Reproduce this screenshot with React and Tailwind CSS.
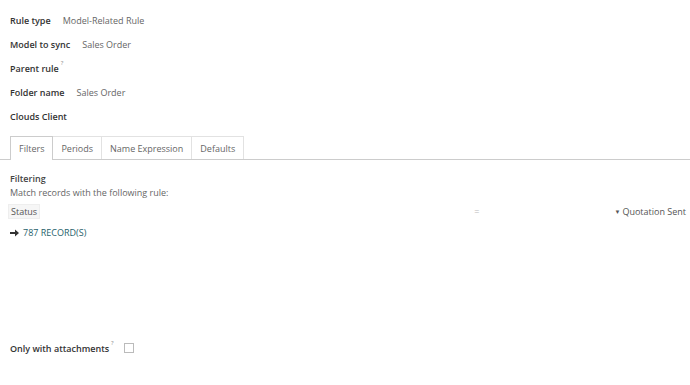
import React from "react";

const Field = ({ label, value, help }) => (
  <div className="flex h-6 items-center">
    <span className="font-semibold text-[#333]">{label}</span>
    {help && <sup className="ml-0.5 -mt-1 text-[6px] text-[#888]">?</sup>}
    {value && <span className="ml-3 text-[#666]">{value}</span>}
  </div>
);

const tabs = ["Filters", "Periods", "Name Expression", "Defaults"];

export default function App() {
  return (
    <div className="min-h-[385px] w-[690px] bg-white text-[9px] font-['Open_Sans',sans-serif] leading-none">
      <div className="px-[10px] pt-2">
        <Field label="Rule type" value="Model-Related Rule" />
        <Field label="Model to sync" value="Sales Order" />
        <Field label="Parent rule" help />
        <Field label="Folder name" value="Sales Order" />
        <Field label="Clouds Client" />
      </div>

      <div className="mt-2 flex h-6 border-b border-[#ccc] pl-[10px]">
        {tabs.map((t, i) => (
          <div
            key={t}
            className={`flex items-center border-x border-t px-[8px] text-[#666] ${
              i === 0 ? "-mb-px border-[#ccc] bg-white" : "border-[#e2e2e2] border-l-0"
            }`}
          >
            {t}
          </div>
        ))}
      </div>

      <div className="pl-[10px] pr-[4px] pt-[14px]">
        <div className="font-semibold text-[#444]">Filtering</div>
        <div className="mt-[5px] text-[#666]">Match records with the following rule:</div>
        <div className="mt-[7px] flex h-[15px] items-center">
          <span className="-ml-[2px] flex h-[15px] items-center border border-[#eee] bg-[#f6f6f6] px-[2px] text-[#555]">Status</span>
          <span className="ml-[434px] text-[#bbb]">=</span>
          <span className="ml-auto flex items-center text-[#555]">
            <span className="mr-[2px] text-[6px]">▼</span>Quotation Sent
          </span>
        </div>
        <div className="mt-[9px] flex items-center text-[#1f5f6b]">
          <svg width="9" height="8" viewBox="0 0 9 8" className="mr-[4px]">
            <path d="M0 3h5V0.5L9 4 5 7.5V5H0z" fill="#333" />
          </svg>
          787 RECORD(S)
        </div>
      </div>

      <div className="mt-[106px] flex items-center px-[10px]">
        <span className="font-semibold text-[#333]">Only with attachments</span>
        <sup className="ml-0.5 -mt-1 text-[6px] text-[#888]">?</sup>
        <span className="ml-[10px] h-[10px] w-[10px] border border-[#bbb] bg-white" />
      </div>
    </div>
  );
}
